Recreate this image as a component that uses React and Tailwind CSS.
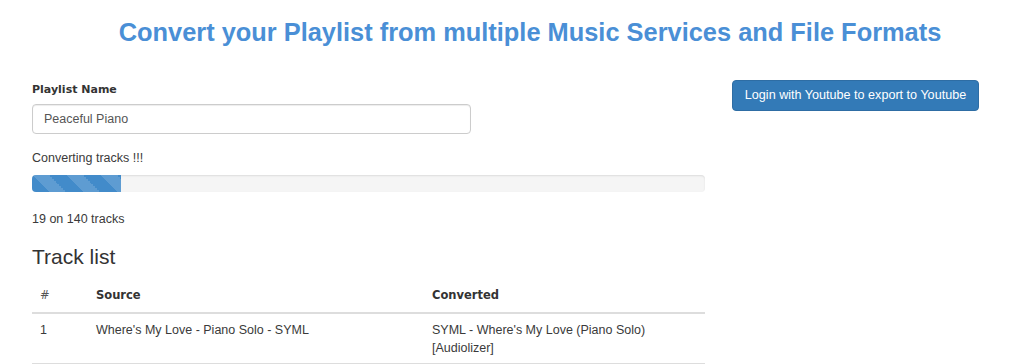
import React from 'react';

const tracks = [
  { n: 1, source: "Where's My Love - Piano Solo - SYML", converted: "SYML - Where's My Love (Piano Solo) [Audiolizer]" },
];

const App = () => {
  const done = 19;
  const total = 140;
  return (
    <div className="w-[1024px] h-[364px] overflow-hidden bg-white text-[#3a3a3a] font-['Liberation_Sans',Arial,sans-serif] text-[12.5px]">
      <h1 className="pt-[19px] pl-[36px] text-center text-[25.4px] font-bold leading-[26px] text-[#4a8fd6]">
        Convert your Playlist from multiple Music Services and File Formats
      </h1>

      <div className="flex items-start pl-[32px] pt-[35px]">
        {/* --- Left column --- */}
        <div className="w-[673px] pt-[3px]">
          <label className="block font-['DejaVu_Sans',sans-serif] text-[11px] font-bold leading-[14px] text-[#333]">
            Playlist Name
          </label>
          <input
            readOnly
            value="Peaceful Piano"
            className="mt-[7px] block h-[30px] w-[439px] rounded-[4px] border border-[#ccc] px-[11px] text-[12.5px] text-[#555] shadow-[inset_0_1px_1px_rgba(0,0,0,0.075)] outline-none"
          />

          <p className="mt-[17px] leading-[14px]">Converting tracks !!!</p>

          <div className="mt-[10px] h-[17px] w-full overflow-hidden rounded-[4px] bg-[#f5f5f5] shadow-[inset_0_1px_2px_rgba(0,0,0,0.1)]">
            <div
              className="h-full bg-[#428bca] bg-[linear-gradient(45deg,rgba(255,255,255,0.15)_25%,transparent_25%,transparent_50%,rgba(255,255,255,0.15)_50%,rgba(255,255,255,0.15)_75%,transparent_75%,transparent)] bg-[length:34px_34px]"
              style={{ width: `${(done / total) * 100 - 0.3}%` }}
            />
          </div>

          <p className="mt-[20px] leading-[14px]">{done} on {total} tracks</p>

          <h3 className="mt-[19px] text-[21px] leading-[24px] text-[#333]">Track list</h3>

          <table className="mt-[10px] w-full border-collapse text-left">
            <thead>
              <tr className="border-b-2 border-[#ddd] font-['DejaVu_Sans',sans-serif] text-[11.5px] font-bold leading-[14px] text-[#333]">
                <th className="w-[64px] px-[8px] pt-[9px] pb-[10px] font-normal text-[#555]">#</th>
                <th className="w-[336px] pt-[9px] pb-[10px]">Source</th>
                <th className="pt-[9px] pb-[10px]">Converted</th>
              </tr>
            </thead>
            <tbody>
              {tracks.map(t => (
                <tr key={t.n} className="border-b border-[#ddd] align-top">
                  <td className="px-[8px] pt-[7px] pb-[6px] leading-[18px]">{t.n}</td>
                  <td className="pt-[7px] pb-[6px] leading-[18px]">{t.source}</td>
                  <td className="pt-[7px] pb-[6px] pr-[8px] leading-[18px]">{t.converted}</td>
                </tr>
              ))}
            </tbody>
          </table>
        </div>

        {/* --- Right column --- */}
        <div className="ml-[27px]">
          <button className="h-[31px] w-[247px] rounded-[4px] border border-[#2e6da4] bg-[#337ab7] text-[12.6px] text-white">
            Login with Youtube to export to Youtube
          </button>
        </div>
      </div>
    </div>
  );
};

export default App;
